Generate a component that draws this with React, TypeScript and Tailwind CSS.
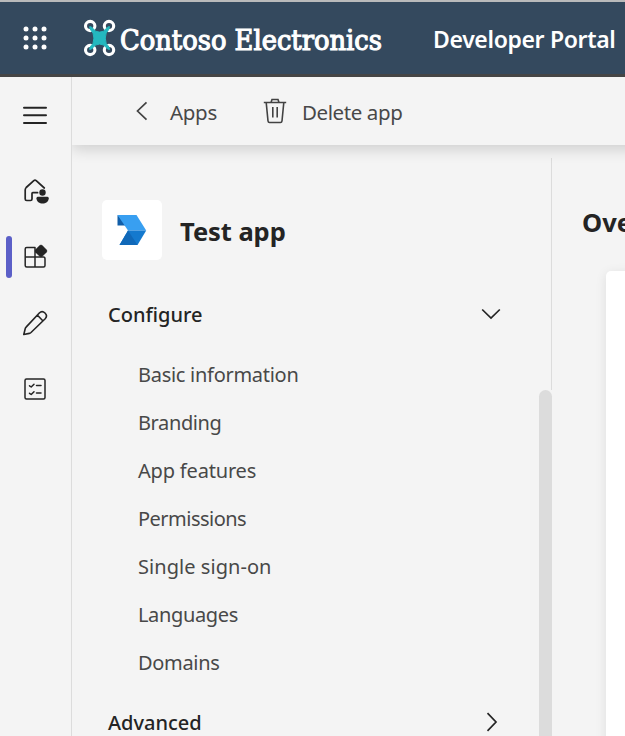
import React from "react";

const navItems = [
  { label: "Basic information", track: "tracking-[-0.28px]" },
  { label: "Branding", track: "tracking-[-0.38px]" },
  { label: "App features", track: "tracking-[-0.18px]" },
  { label: "Permissions", track: "tracking-[-0.52px]" },
  { label: "Single sign-on", track: "tracking-[0.05px]" },
  { label: "Languages", track: "tracking-[-0.36px]" },
  { label: "Domains", track: "tracking-[-0.32px]" },
];

function Waffle() {
  return (
    <svg width="26" height="26" viewBox="0 0 26 26" fill="#fff" className="shrink-0">
      {[4, 13, 22].map((y) => [4, 13, 22].map((x) => <circle key={`${x}-${y}`} cx={x} cy={y} r="2.5" />))}
    </svg>
  );
}

function Logo() {
  return (
    <svg width="302" height="44" viewBox="82 16 302 44" className="shrink-0">
      <g fill="none" stroke="#fff" strokeWidth="3.1">
        <ellipse cx="90.200" cy="26" rx="4.700" ry="4.600" />
        <ellipse cx="109" cy="26" rx="4.700" ry="4.600" />
        <ellipse cx="90.200" cy="50" rx="4.700" ry="4.600" />
        <ellipse cx="109" cy="50" rx="4.700" ry="4.600" />
      </g>
      <path
        d="M89.700 26.600Q91.500 26.300 95.500 31.200Q99.600 33 103.700 31.200Q107.700 26.300 109.500 26.600Q110.200 28.200 106.200 33Q104.400 38 106.200 43.500Q110.200 48 109.500 49.500Q107.700 49.700 103.700 45Q99.600 43.200 95.500 45Q91.500 49.700 89.700 49.500Q89 48 93 43.500Q94.800 38 93 33Q89 28.200 89.700 26.600Z"
        fill="#24b9bf"
        stroke="#24b9bf"
        strokeWidth="1"
        strokeLinejoin="round"
      />
      <text
        x="120"
        y="50.300"
        fill="#fff"
        stroke="#fff"
        strokeWidth="1.1"
        fontSize="28.500"
        textLength="262"
        lengthAdjust="spacingAndGlyphs"
        fontFamily="'DejaVu Serif Condensed','DejaVu Serif',serif"
      >
        Contoso Electronics
      </text>
    </svg>
  );
}

function Rail() {
  const line = { fill: "none", stroke: "#242424", strokeWidth: 1.7, strokeLinejoin: "round", strokeLinecap: "round" } as const;
  return (
    <nav className="z-20 flex w-[72px] shrink-0 flex-col border-r border-[#dcdcdc] bg-[#f4f4f4] pt-[23px]">
      <div className="flex h-[30px] items-center pl-[21px]">
        <svg width="28" height="28" viewBox="21 101 28 28" {...line} strokeWidth={2}>
          <path d="M24 107.700H46M24 115.300H46M24 123H46" />
        </svg>
      </div>
      <div className="mt-[44px] flex h-[36px] items-center pl-[20px]">
        <svg width="32" height="32" viewBox="20 176 32 32" {...line}>
          <path d="M44.300 188L36.200 180.600Q35 179.600 33.800 180.600L26.200 187.500Q25.200 188.500 25.200 190V199Q25.200 200.500 26.700 200.500H30.500Q32 200.500 32 199V193.500Q32 192.700 32.800 192.700H37.600" />
          <circle cx="42.500" cy="192.500" r="3.200" fill="#242424" stroke="none" />
          <path d="M38 196.800H47.200Q48.700 196.800 48.700 198.200C48.700 205.200 36.500 205.200 36.500 198.200Q36.500 196.800 38 196.800Z" fill="#242424" stroke="none" />
        </svg>
      </div>
      <div className="mt-[26px] flex h-[42px] items-center pl-[6px]">
        <span className="h-[42px] w-[6px] rounded-full bg-[#5b5fc7]" />
        <svg width="32" height="32" viewBox="20 241 32 32" className="ml-[8px]" {...line} strokeWidth={1.5}>
          <path d="M35 247.500H26.700Q25.200 247.500 25.200 249V265.500Q25.200 267 26.700 267H43.500Q45 267 45 265.500V259Q45 257 43.500 257H25.200M35 247.500V267" />
          <path d="M39.900 245.300Q41 244.500 42.100 245.300L46.500 249.800Q47.500 251 46.500 252.200L42.100 256.500Q41 257.400 39.900 256.500L35.400 252.200Q34.500 251 35.400 249.800Z" fill="#242424" stroke="#242424" strokeWidth="0.4" />
        </svg>
      </div>
      <div className="mt-[29px] flex h-[32px] items-center pl-[20px]">
        <svg width="32" height="32" viewBox="20 307 32 32" {...line} strokeWidth={1.600}>
          <path d="M39.300 313C43 309.300 48.800 314.800 45.200 318.700L31 332.500Q30.200 333.200 29.300 333.400L23.800 334.500L25.200 328.700Q25.400 327.800 26.100 327.100ZM37.500 315.300L42.800 320.800" />
        </svg>
      </div>
      <div className="mt-[34px] flex h-[32px] items-center pl-[20px]">
        <svg width="32" height="32" viewBox="20 373 32 32" {...line} strokeWidth={1.500}>
          <rect x="25" y="379" width="20" height="20" rx="1.500" />
          <path d="M29.500 385.800L31.200 387L34 384.200M36.500 385.500H41M29.500 393.300L31.200 394.500L34 391.700M36.500 393H41" />
        </svg>
      </div>
    </nav>
  );
}

function AppLogo() {
  return (
    <div className="flex size-[60px] items-center justify-center rounded-[5px] bg-white">
      <svg width="30" height="32" viewBox="117 214 30 32">
        <path d="M117.500 215L128 225.500H117.500Z" fill="#115ea8" />
        <path d="M117.500 215H136.500L146.200 230.500H128Z" fill="#389ff1" />
        <path d="M128 230.500H146.200L137.500 245H119.500Z" fill="#1479ce" />
        <path d="M128 230.500L137.500 245H119.500Z" fill="#1068b8" />
      </svg>
    </div>
  );
}

export default function App() {
  return (
    <div className="flex h-[736px] w-[625px] flex-col overflow-hidden bg-[#f4f4f4] font-['Noto_Sans','Open_Sans',sans-serif] text-[#242424]">
      <header className="z-30 flex h-[77px] shrink-0 items-center border-t-2 border-b-3 border-t-[#b9babb] border-b-[#454545] bg-[#34495e] pl-[22px] whitespace-nowrap text-white">
        <Waffle />
        <div className="ml-[34px]">
          <Logo />
        </div>
        <span className="ml-[49px] pt-[2px] text-[23px] leading-[32px] font-semibold tracking-[-0.35px]">Developer Portal</span>
      </header>
      <div className="flex min-h-0 flex-1">
        <Rail />
        <div className="flex min-w-0 flex-1 flex-col">
          <div className="z-10 -mr-6 flex h-[68px] shrink-0 items-center text-[20.500px] leading-[28px] whitespace-nowrap text-[#484848] shadow-[0_4px_14px_rgba(0,0,0,0.16)]">
            <svg width="14" height="20" viewBox="135 101 14 20" className="ml-[63px]" fill="none" stroke="#424242" strokeWidth="1.700">
              <path d="M146.500 102.300L137.500 111L146.500 119.700" />
            </svg>
            <span className="ml-[21px] w-[60px] pt-[2px] tracking-[-0.3px]">Apps</span>
            <svg width="26" height="28" viewBox="262 97 26 28" className="ml-[32px]" fill="none" stroke="#424242" strokeWidth="1.600">
              <path d="M263.800 102.500H286.200M271 102.500L272 99.500H278L279 102.500M266.200 102.500L268 121Q268.200 122.500 269.500 122.500H280.500Q281.800 122.500 282 121L283.800 102.500M272.800 107V117.500M277.200 107V117.500" />
            </svg>
            <span className="ml-[14px] pt-[2px] tracking-[-0.4px]">Delete app</span>
          </div>
          <div className="flex min-h-0 flex-1">
            <aside className="flex w-[467px] shrink-0 flex-col pt-[55px] pl-[30px]">
              <div className="flex items-center gap-[18px]">
                <AppLogo />
                <h1 className="pt-[2px] text-[25.500px] leading-[34px] font-bold tracking-[-0.05px]">Test app</h1>
              </div>
              <div className="mt-[39px] flex h-[30px] items-center justify-between pr-[38px] pl-[6px]">
                <h2 className="pt-[2px] text-[20px] leading-[30px] font-medium">Configure</h2>
                <svg width="20" height="12" viewBox="0 0 20 12" fill="none" stroke="#242424" strokeWidth="1.700"><path d="M1.200 1.500L10 10L18.800 1.500" /></svg>
              </div>
              <ul className="mt-[22px] pl-[36px] text-[20px] leading-[48px] text-[#484848]">
                {navItems.map((item) => (
                  <li key={item.label} className={`h-[48px] ${item.track}`}>{item.label}</li>
                ))}
              </ul>
              <div className="mt-[20px] flex h-[30px] shrink-0 items-center justify-between pr-[41px] pl-[6px]">
                <h2 className="pt-[2px] text-[20px] leading-[30px] font-medium">Advanced</h2>
                <svg width="12" height="20" viewBox="0 0 12 20" fill="none" stroke="#242424" strokeWidth="1.700"><path d="M1.500 1.200L10 10L1.500 18.800" /></svg>
              </div>
            </aside>
            <div className="flex w-[13px] shrink-0 flex-col items-end">
              <div className="mt-[13px] h-[232px] w-px bg-[#dcdcdc]" />
              <div className="w-[13px] flex-1 rounded-t-full bg-[#dcdcdc]" />
            </div>
            <main className="min-w-0 flex-1 overflow-hidden pt-[60px] pl-[30px]">
              <h2 className="text-[25.500px] leading-[34px] font-bold">Overview</h2>
              <div className="mt-[32px] ml-[24px] h-[480px] w-[400px] rounded-[5px] bg-white shadow-[0_2px_12px_rgba(0,0,0,0.09)]" />
            </main>
          </div>
        </div>
      </div>
    </div>
  );
}
